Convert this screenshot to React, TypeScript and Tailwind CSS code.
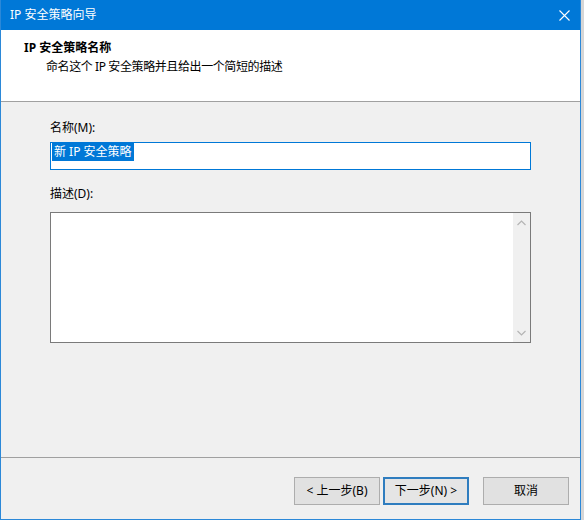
const font = { fontFamily: '"Noto Sans", "Noto Sans CJK SC", sans-serif' };

function Chevron({ up }: { up?: boolean }) {
  return (
    <svg width="9" height="6" viewBox="0 0 9 6" className="block">
      <path d={up ? 'M0.5 5 L4.5 1 L8.5 5' : 'M0.5 1 L4.5 5 L8.5 1'} fill="none" stroke="#b4b4b4" strokeWidth="1.2" />
    </svg>
  );
}

function Button({ label, focused }: { label: string; focused?: boolean }) {
  return (
    <button
      className={
        focused
          ? 'w-[86px] h-[28px] bg-[#e5e5e5] border-2 border-[#2f7dbf] text-[12px] text-black leading-none'
          : 'w-[86px] h-[28px] bg-[#e1e1e1] border border-[#adadad] text-[12px] text-black leading-none'
      }
    >
      {label}
    </button>
  );
}

export default function App() {
  return (
    <div className="flex w-[584px] h-[520px] bg-[#d6d6d6] text-black" style={font}>
      <div className="flex flex-col w-[581px] h-[520px] border-x border-b border-[#2b88d8] bg-[#f0f0f0]">
        {/* title bar */}
        <div className="h-[30px] bg-[#0078d7] flex items-center justify-between pl-[9px] pr-[10px] text-white text-[12px]">
          <span>IP 安全策略向导</span>
          <svg width="11" height="11" viewBox="0 0 11 11">
            <path d="M0.5 0.5 L10.5 10.5 M10.5 0.5 L0.5 10.5" stroke="#fff" strokeWidth="1.1" />
          </svg>
        </div>

        {/* header */}
        <div className="h-[72px] bg-white border-b border-[#a0a0a0] pt-[10px] pl-[23px] text-[12px] leading-[16px]">
          <div className="font-bold">IP 安全策略名称</div>
          <div className="pl-[22px] mt-[3px] tracking-[-0.4px]">命名这个 IP 安全策略并且给出一个简短的描述</div>
        </div>

        {/* body */}
        <div className="h-[356px] border-b border-[#a0a0a0] pt-[18px] pl-[49px] text-[12px] leading-[16px]">
          <div>名称(M):</div>
          <div className="mt-[6px] w-[481px] h-[28px] border border-[#0078d7] bg-white pl-[1px]">
            <span className="inline-block bg-[#0078d7] text-white px-[2px] h-[18px] leading-[18px]">新 IP 安全策略</span>
          </div>
          <div className="mt-[16px]">描述(D):</div>
          <div className="mt-[10px] w-[481px] h-[131px] border border-[#7a7a7a] bg-white flex justify-end">
            <div className="w-[17px] h-full bg-[#f0f0f0] flex flex-col items-center justify-between pt-[7px] pb-[6px]">
              <Chevron up />
              <Chevron />
            </div>
          </div>
        </div>

        {/* footer */}
        <div className="flex-1 flex items-start pt-[19px] pl-[293px]">
          <Button label="< 上一步(B)" />
          <div className="ml-[3px]">
            <Button label="下一步(N) >" focused />
          </div>
          <div className="ml-[14px]">
            <Button label="取消" />
          </div>
        </div>
      </div>
      <div className="flex-1" />
    </div>
  );
}
